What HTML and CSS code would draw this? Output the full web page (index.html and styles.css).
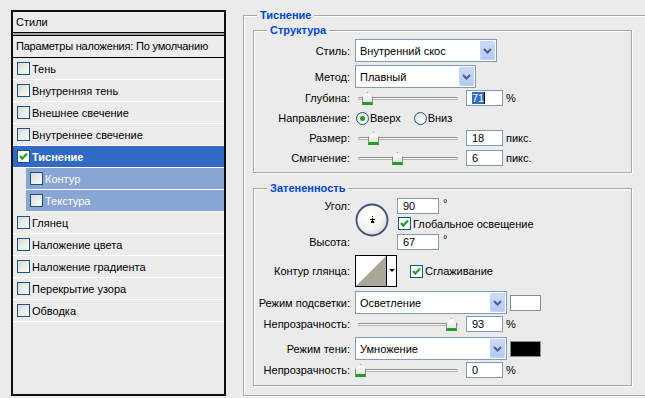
FILE: index.html
```html
<html>
	<head>
		<link rel="stylesheet" href="styles.css">
	</head>
	<body>
		<div class="dialog">
			<div class="stylesPanel">
				<div class="panelHead">Стили</div>
				<div class="panelBlend">Параметры наложения: По умолчанию</div>
				<ul class="fxList">
					<li class="fx"><span class="check"></span>Тень</li>
					<li class="fx"><span class="check"></span>Внутренняя тень</li>
					<li class="fx"><span class="check"></span>Внешнее свечение</li>
					<li class="fx"><span class="check"></span>Внутреннее свечение</li>
					<li class="fx fxOn"><span class="check checked"><svg width="11" height="11" viewBox="0 0 11 11"><path d="M2 5 L4.3 7.6 L9 2.6" fill="none" stroke="#21a121" stroke-width="2.2"/></svg></span>Тиснение</li>
					<li class="fx fxSub"><span class="check"></span>Контур</li>
					<li class="fx fxSub"><span class="check"></span>Текстура</li>
					<li class="fx"><span class="check"></span>Глянец</li>
					<li class="fx"><span class="check"></span>Наложение цвета</li>
					<li class="fx"><span class="check"></span>Наложение градиента</li>
					<li class="fx"><span class="check"></span>Перекрытие узора</li>
					<li class="fx"><span class="check"></span>Обводка</li>
				</ul>
			</div>

			<div class="settings">
				<div class="group groupOuter">
					<span class="legend">Тиснение</span>

					<div class="group groupStructure">
						<span class="legend">Структура</span>
						<div class="row rowCombo">
							<span class="lbl">Стиль:</span>
							<div class="combo comboStyle"><span class="comboVal">Внутренний скос</span><span class="comboBtn"><svg width="9" height="6" viewBox="0 0 9 6"><path d="M1 1 L4.5 4.5 L8 1" fill="none" stroke="#4d6185" stroke-width="2"/></svg></span></div>
						</div>
						<div class="row rowCombo rowGap">
							<span class="lbl">Метод:</span>
							<div class="combo comboMethod"><span class="comboVal">Плавный</span><span class="comboBtn"><svg width="9" height="6" viewBox="0 0 9 6"><path d="M1 1 L4.5 4.5 L8 1" fill="none" stroke="#4d6185" stroke-width="2"/></svg></span></div>
						</div>
						<div class="row">
							<span class="lbl">Глубина:</span>
							<div class="slider"><span class="thumb" style="left:7px"></span></div>
							<span class="num"><span class="selText">71</span></span>
							<span class="unit">%</span>
						</div>
						<div class="row">
							<span class="lbl">Направление:</span>
							<span class="radio checked"></span><span class="radioText">Вверх</span>
							<span class="radio radioSecond"></span><span class="radioText">Вниз</span>
						</div>
						<div class="row">
							<span class="lbl">Размер:</span>
							<div class="slider"><span class="thumb" style="left:13px"></span></div>
							<span class="num">18</span>
							<span class="unit">пикс.</span>
						</div>
						<div class="row">
							<span class="lbl">Смягчение:</span>
							<div class="slider"><span class="thumb" style="left:37px"></span></div>
							<span class="num">6</span>
							<span class="unit">пикс.</span>
						</div>
					</div>

					<div class="group groupShading">
						<span class="legend">Затененность</span>
						<div class="angleBlock">
							<div class="angleLabels">
								<span class="lbl">Угол:</span>
								<span class="lbl">Высота:</span>
							</div>
							<div class="dial">
								<svg width="34" height="34" viewBox="0 0 34 34">
									<defs>
										<radialGradient id="dialFill" cx="0.45" cy="0.4" r="0.6">
											<stop offset="0" stop-color="#ffffff"/>
											<stop offset="0.7" stop-color="#f4f4ef"/>
											<stop offset="1" stop-color="#d6d6cc"/>
										</radialGradient>
									</defs>
									<circle cx="17" cy="17" r="15.5" fill="url(#dialFill)" stroke="#3f4f7e" stroke-width="1.8"/>
									<rect x="17" y="13" width="1" height="1" fill="#000"/>
									<rect x="15" y="16" width="5" height="1" fill="#000"/>
									<rect x="17" y="15" width="1" height="3" fill="#000"/>
									<rect x="16" y="18" width="3" height="2" fill="#000"/>
								</svg>
							</div>
							<div class="angleFields">
								<div class="fieldLine"><span class="num numAngle">90</span><span class="deg">°</span></div>
								<div class="fieldLine checkLine"><span class="check checked"><svg width="11" height="11" viewBox="0 0 11 11"><path d="M2 5 L4.3 7.6 L9 2.6" fill="none" stroke="#21a121" stroke-width="2.2"/></svg></span>Глобальное освещение</div>
								<div class="fieldLine"><span class="num numAngle">67</span><span class="deg">°</span></div>
							</div>
						</div>
						<div class="row rowContour">
							<span class="lbl">Контур глянца:</span>
							<span class="contour">
								<svg width="42" height="32" viewBox="0 0 42 32">
									<rect x="0.5" y="0.5" width="41" height="31" fill="#fff" stroke="#000"/>
									<polygon points="1,31 31,1 31,31" fill="#aba799"/>
									<rect x="31" y="0" width="1" height="32" fill="#000"/>
									<polygon points="34,14 40,14 37,17" fill="#000"/>
								</svg>
							</span>
							<span class="check checked smoothCheck"><svg width="11" height="11" viewBox="0 0 11 11"><path d="M2 5 L4.3 7.6 L9 2.6" fill="none" stroke="#21a121" stroke-width="2.2"/></svg></span>
							<span class="checkText">Сглаживание</span>
						</div>
						<div class="row rowCombo rowMode">
							<span class="lbl">Режим подсветки:</span>
							<div class="combo comboMode"><span class="comboVal">Осветление</span><span class="comboBtn"><svg width="9" height="6" viewBox="0 0 9 6"><path d="M1 1 L4.5 4.5 L8 1" fill="none" stroke="#4d6185" stroke-width="2"/></svg></span></div>
							<span class="swatch swatchWhite"></span>
						</div>
						<div class="row">
							<span class="lbl">Непрозрачность:</span>
							<div class="slider"><span class="thumb" style="left:91px"></span></div>
							<span class="num">93</span>
							<span class="unit">%</span>
						</div>
						<div class="row rowCombo rowGap">
							<span class="lbl">Режим тени:</span>
							<div class="combo comboMode"><span class="comboVal">Умножение</span><span class="comboBtn"><svg width="9" height="6" viewBox="0 0 9 6"><path d="M1 1 L4.5 4.5 L8 1" fill="none" stroke="#4d6185" stroke-width="2"/></svg></span></div>
							<span class="swatch swatchBlack"></span>
						</div>
						<div class="row">
							<span class="lbl">Непрозрачность:</span>
							<div class="slider"><span class="thumb" style="left:0px"></span></div>
							<span class="num">0</span>
							<span class="unit">%</span>
						</div>
					</div>
				</div>
			</div>
		</div>
	</body>
</html>
```

FILE: styles.css
```css
html, body {
	margin: 0;
	padding: 0;
	width: 100%;
	height: 100%;
	overflow: hidden;
	background: #ebebeb;
	font-family: "Liberation Sans", Arial, sans-serif;
	font-size: 11px;
	color: #000;
}

.dialog {
	display: flex;
	flex-direction: row;
	padding: 10px 0 0 11px;
}

/* left list of effects */
.stylesPanel {
	width: 215px;
	height: 386px;
	box-sizing: border-box;
	border: 2px solid #111;
	background: #ececec;
	flex: none;
	white-space: nowrap;
}

.panelHead {
	height: 20px;
	line-height: 20px;
	padding-left: 3px;
	border-bottom: 1px solid #000;
	box-shadow: 0 2px 0 #a4a4a0;
}

.panelBlend {
	margin-top: 2px;
	height: 21px;
	line-height: 21px;
	padding-left: 3px;
	border-top: 1px solid #000;
	border-bottom: 1px solid #000;
	letter-spacing: -0.2px;
}

.fxList {
	list-style: none;
	margin: 0;
	padding: 0;
}

.fx {
	display: flex;
	align-items: center;
	height: 21px;
	padding-left: 4px;
	border-bottom: 1px solid #fff;
}

.fx .check {
	margin-right: 2px;
}

.fxOn {
	background: #316ac5;
	color: #fff;
	font-weight: bold;
}

.fxOn .check {
	background: #fff;
}

.fxSub {
	margin-left: 13px;
	background: #89a5d3;
	color: #fff;
}

.check {
	display: inline-flex;
	align-items: center;
	justify-content: center;
	width: 13px;
	height: 13px;
	box-sizing: border-box;
	border: 1px solid #1c5180;
	background: linear-gradient(135deg, #dcdcd6, #fbfbf9);
	flex: none;
}

.check.checked {
	background: #fff;
}

/* right settings */
.settings {
	margin-left: 17px;
	padding-top: 5px;
	flex: none;
	white-space: nowrap;
}

.group {
	position: relative;
	box-sizing: border-box;
	border: 1px solid #a7a79d;
	box-shadow: 1px 1px 0 #fff, inset 1px 1px 0 #fff;
}

.legend {
	position: absolute;
	top: -7px;
	left: 13px;
	padding: 0 3px;
	line-height: 13px;
	background: #ebebeb;
	color: #0046d5;
	font-weight: bold;
}

.groupOuter {
	width: 420px;
	height: 381px;
	border-right: none;
	padding: 14px 0 0 9px;
}

.groupStructure {
	width: 379px;
	height: 143px;
	padding-top: 8px;
}

.groupShading {
	width: 379px;
	height: 198px;
	margin-top: 15px;
	padding-top: 9px;
}

.row {
	display: flex;
	align-items: center;
	height: 20px;
}

.rowCombo {
	height: 23px;
}

.rowGap {
	margin-top: 3px;
}

.lbl {
	display: flex;
	justify-content: flex-end;
	width: 96px;
	margin-right: 5px;
	flex: none;
}

.combo {
	display: flex;
	align-items: center;
	height: 23px;
	box-sizing: border-box;
	border: 1px solid #7f9db9;
	background: #fff;
}

.comboVal {
	flex: 1;
	padding-left: 4px;
}

.comboBtn {
	display: flex;
	align-items: center;
	justify-content: center;
	width: 15px;
	height: 19px;
	margin-right: 1px;
	border-radius: 2px;
	background: linear-gradient(#cddcfd, #b3c7f6);
	box-shadow: inset 0 0 0 1px #c4d4f8;
}

.comboStyle {
	width: 142px;
}

.comboMethod {
	width: 121px;
}

.comboMode {
	width: 152px;
}

.slider {
	position: relative;
	width: 107px;
	height: 20px;
	flex: none;
}

.slider::before {
	content: "";
	position: absolute;
	left: 3px;
	top: 9px;
	width: 100px;
	height: 3px;
	box-sizing: border-box;
	border: 1px solid #b4b4aa;
	border-top-color: #8e8e86;
	border-radius: 2px;
	background: #f7f7f4;
}

.thumb {
	position: absolute;
	top: 4px;
	width: 11px;
	height: 13px;
	box-sizing: border-box;
	border: 1px solid #8d8d86;
	border-bottom: 3px solid #21a121;
	background: linear-gradient(#ffffff, #e6e6e0);
	clip-path: polygon(0 38%, 50% 0, 100% 38%, 100% 100%, 0 100%);
}

.num {
	display: inline-block;
	width: 37px;
	height: 16px;
	line-height: 14px;
	box-sizing: border-box;
	border: 1px solid #7f9db9;
	background: #fff;
	padding-left: 5px;
	margin-left: 4px;
	flex: none;
}

.selText {
	background: #316ac5;
	color: #fff;
	border-right: 1px solid #000;
}

.unit {
	margin-left: 3px;
}

.radio {
	display: inline-block;
	position: relative;
	width: 13px;
	height: 13px;
	box-sizing: border-box;
	margin-left: 1px;
	border: 1px solid #1c5180;
	border-radius: 50%;
	background: radial-gradient(circle at 65% 65%, #ffffff, #dcdcd6);
	flex: none;
}

.radio.checked::after {
	content: "";
	position: absolute;
	left: 3px;
	top: 3px;
	width: 5px;
	height: 5px;
	border-radius: 50%;
	background: #21a121;
}

.radioText {
	margin-left: 1px;
}

.radioSecond {
	margin-left: 13px;
}

/* angle */
.angleBlock {
	display: flex;
	flex-direction: row;
	height: 52px;
}

.angleLabels {
	display: flex;
	flex-direction: column;
	justify-content: space-between;
}

.angleLabels .lbl {
	line-height: 16px;
}

.dial {
	width: 42px;
	padding-top: 5px;
}

.angleFields {
	display: flex;
	flex-direction: column;
}

.fieldLine {
	display: flex;
	align-items: center;
}

.numAngle {
	width: 42px;
	margin-left: 0;
}

.deg {
	margin-left: 4px;
	align-self: flex-start;
	line-height: 10px;
}

.checkLine {
	margin: 3px 0 4px 1px;
	height: 13px;
}

.checkLine .check {
	margin-right: 2px;
}

.rowContour {
	height: 32px;
	margin-top: 5px;
}

.contour {
	display: inline-flex;
	width: 42px;
	height: 32px;
}

.smoothCheck {
	margin-left: 13px;
}

.checkText {
	margin-left: 2px;
}

.rowMode {
	margin-top: 4px;
}

.swatch {
	width: 31px;
	height: 16px;
	box-sizing: border-box;
	margin-left: 3px;
	border: 1px solid #8c8c8c;
}

.swatchWhite {
	background: #fff;
}

.swatchBlack {
	background: #000;
}
```
